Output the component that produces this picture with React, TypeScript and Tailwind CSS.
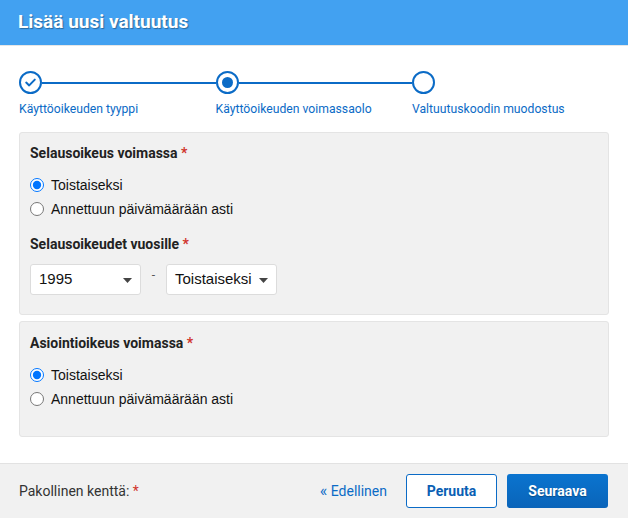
import React from "react";

const roboto = { fontFamily: "Roboto, 'Liberation Sans', sans-serif" };

function Step({ state, label, last }: { state: "done" | "active" | "todo"; label: string; last?: boolean }) {
  return (
    <div className={last ? "flex-1" : "w-[196.5px] shrink-0"}>
      <div className="flex items-center h-[23px]">
        <div className="w-[23px] h-[23px] rounded-full border-2 border-[#0b6bc6] bg-white flex items-center justify-center shrink-0">
          {state === "done" && (
            <svg width="13" height="13" viewBox="0 0 13 13">
              <path d="M2.2 6.6 L5.2 9.4 L10.8 3.6" fill="none" stroke="#0b6bc6" strokeWidth="2" strokeLinecap="round" strokeLinejoin="round" />
            </svg>
          )}
          {state === "active" && <div className="w-[11px] h-[11px] rounded-full bg-[#0b6bc6]" />}
        </div>
        {!last && <div className="flex-1 h-[2px] bg-[#0b6bc6]" />}
      </div>
      <div className="mt-[7px] text-[12.2px] leading-[16px] text-[#0b6bc6]" style={roboto}>
        {label}
      </div>
    </div>
  );
}

function Radio({ checked, label, name }: { checked?: boolean; label: string; name: string }) {
  return (
    <label className="flex items-center h-[24px] gap-[7px]">
      <input type="radio" name={name} defaultChecked={checked} className="w-[14px] h-[14px] m-0" />
      <span className="text-[14px] text-[#111]" style={{ fontFamily: "'Liberation Sans', Arial, sans-serif" }}>
        {label}
      </span>
    </label>
  );
}

function Heading({ children }: { children: React.ReactNode }) {
  return (
    <div className="h-[20px] leading-[20px] text-[14px] font-bold text-[#222]" style={roboto}>
      {children} <span className="text-[#d0332b]">*</span>
    </div>
  );
}

function Select({ value, width }: { value: string; width: string }) {
  return (
    <div
      className={`${width} h-[31px] bg-white border border-[#dcdcdc] rounded-[3px] flex items-center justify-between pl-[8px] pr-[8px]`}
      style={{ fontFamily: "'Liberation Sans', Arial, sans-serif" }}
    >
      <span className="text-[15px] text-[#111]">{value}</span>
      <svg width="9" height="5" viewBox="0 0 9 5" className="mt-[1px]">
        <path d="M0 0 L9 0 L4.5 5 Z" fill="#444" />
      </svg>
    </div>
  );
}

export default function App() {
  return (
    <div className="w-[628px] h-[518px] bg-white flex flex-col overflow-hidden" style={roboto}>
      <div className="h-[46px] bg-[#42a1f1] flex items-center px-[18px] border-b border-[#e6e6e6] shrink-0">
        <h1 className="text-[19px] font-bold text-white" style={{ ...roboto, textShadow: "1px 1px 1px rgba(0,0,0,0.35)" }}>
          Lisää uusi valtuutus
        </h1>
      </div>

      <div className="flex px-[19px] pt-[25px]">
        <Step state="done" label="Käyttöoikeuden tyyppi" />
        <Step state="active" label="Käyttöoikeuden voimassaolo" />
        <Step state="todo" label="Valtuutuskoodin muodostus" last />
      </div>

      <div className="mx-[19px] mt-[15px] bg-[#f1f1f1] border border-[#e4e4e4] rounded-[3px] px-[10px] pt-[10px] pb-[19px]">
        <Heading>Selausoikeus voimassa</Heading>
        <div className="mt-[10px]">
          <Radio name="a" checked label="Toistaiseksi" />
          <Radio name="a" label="Annettuun päivämäärään asti" />
        </div>
        <div className="mt-[13px]">
          <Heading>Selausoikeudet vuosille</Heading>
        </div>
        <div className="mt-[10px] flex items-center">
          <Select value="1995" width="w-[111px]" />
          <span className="w-[25px] text-center text-[12px] text-[#555] -mt-[10px]">-</span>
          <Select value="Toistaiseksi" width="w-[111px]" />
        </div>
      </div>

      <div className="mx-[19px] mt-[6px] bg-[#f1f1f1] border border-[#e4e4e4] rounded-[3px] px-[10px] pt-[11px] pb-[25px]">
        <Heading>Asiointioikeus voimassa</Heading>
        <div className="mt-[10px]">
          <Radio name="b" checked label="Toistaiseksi" />
          <Radio name="b" label="Annettuun päivämäärään asti" />
        </div>
      </div>

      <div className="mt-auto h-[55px] bg-[#f1f1f1] border-t border-[#e2e2e2] flex items-center pl-[19px] pr-[20px] shrink-0">
        <div className="text-[14px] text-[#333]" style={roboto}>
          Pakollinen kenttä: <span className="text-[#d0332b]">*</span>
        </div>
        <div className="ml-auto flex items-center">
          <span className="text-[14px] text-[#0b6bc6] mr-[19px]" style={roboto}>
            <span className="text-[16px]">«</span> Edellinen
          </span>
          <button className="w-[91px] h-[34px] bg-white border border-[#0b6bc6] rounded-[3px] text-[14px] font-bold text-[#0a5fb4]" style={roboto}>
            Peruuta
          </button>
          <button
            className="ml-[10px] w-[101px] h-[34px] rounded-[3px] text-[14px] font-bold text-white bg-gradient-to-b from-[#0a74cf] to-[#0a64b9]"
            style={{ ...roboto, textShadow: "0 1px 1px rgba(0,0,0,0.3)" }}
          >
            Seuraava
          </button>
        </div>
      </div>
    </div>
  );
}
